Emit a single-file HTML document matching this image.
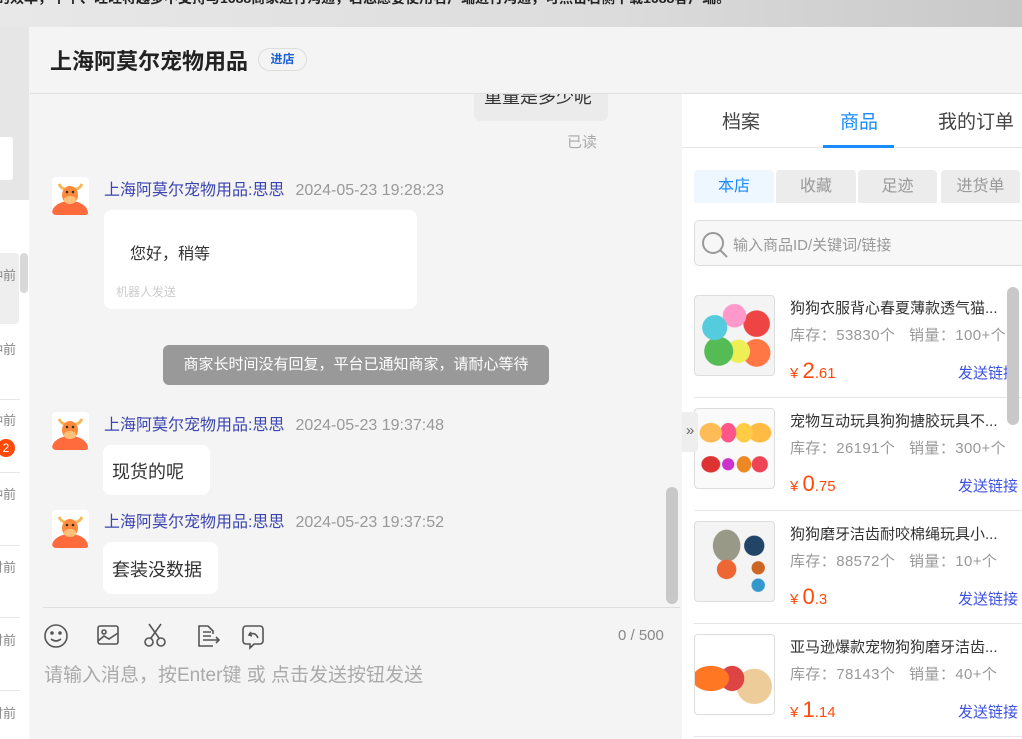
<!DOCTYPE html>
<html><head><meta charset="utf-8"><style>
*{margin:0;padding:0;box-sizing:border-box}
body{width:1022px;height:739px;overflow:hidden;position:relative;background:#f4f4f4;font-family:"Liberation Sans","Noto Sans CJK SC",sans-serif}
.a{position:absolute}
.t{white-space:nowrap}
.av{position:absolute;width:37px;height:38px;background:#fff;border-radius:4px;overflow:hidden}
.nm{position:absolute;font-size:16px;color:#3b45b0;white-space:nowrap}
.nm span{color:#999;margin-left:11px}
.bub{position:absolute;background:#fff;border-radius:8px}
.prod .img{position:absolute;left:694px;width:81px;height:81px;border:1px solid #ddd;border-radius:4px;background:#f8f8f8;overflow:hidden}
.ttl{position:absolute;left:790px;font-size:15px;color:#333;white-space:nowrap}
.stk{position:absolute;left:790px;font-size:15px;color:#999;white-space:nowrap;letter-spacing:0.4px}
.pr{position:absolute;left:790px;color:#ff4a0a;font-size:15px;white-space:nowrap}
.pr b{font-weight:normal;font-size:22px}
.snd{position:absolute;left:958px;font-size:15px;color:#3c50e0;white-space:nowrap}
.dv{position:absolute;left:694px;width:328px;height:1px;background:#e6e6e6}
</style></head><body>
<div class="a" style="left:0;top:0;width:1022px;height:27px;background:linear-gradient(90deg,#e8e8e8,#dcdcdc 60%,#c8c8c8)"></div>
<div class="a t" style="left:-4px;top:-12px;font-size:14px;font-weight:bold;color:#222">的效率，个个、旺旺将越多不支持与1688商家进行沟通，若您愿要使用名广端进行沟通，可点击右侧下载1688客户端。</div>
<div class="a" style="left:0;top:27px;width:29px;height:712px;background:#fff"></div>
<div class="a" style="left:0;top:27px;width:29px;height:173px;background:#e6e6e6"></div>
<div class="a" style="left:0;top:137px;width:13px;height:43px;background:#fff;border-radius:0 3px 3px 0"></div>
<div class="a" style="left:0;top:253px;width:19px;height:71px;background:#eee;border-radius:0 4px 4px 0"></div>
<div class="a" style="left:20px;top:253px;width:8px;height:40px;background:#d8d8d8;border-radius:4px"></div>
<div class="a t" style="left:-10px;top:265px;font-size:13px;color:#888">钟前</div>
<div class="a t" style="left:-10px;top:339px;font-size:13px;color:#888">钟前</div>
<div class="a" style="left:0;top:399px;width:20px;height:1px;background:#e6e6e6"></div>
<div class="a t" style="left:-10px;top:410px;font-size:13px;color:#888">钟前</div>
<div class="a" style="left:-3px;top:439px;width:18px;height:18px;border-radius:50%;background:#ff4a0a;color:#fff;font-size:12px;text-align:center;line-height:18px">2</div>
<div class="a" style="left:0;top:472px;width:20px;height:1px;background:#e6e6e6"></div>
<div class="a t" style="left:-10px;top:484px;font-size:13px;color:#888">钟前</div>
<div class="a" style="left:0;top:545px;width:20px;height:1px;background:#e6e6e6"></div>
<div class="a t" style="left:-10px;top:557px;font-size:13px;color:#888">时前</div>
<div class="a" style="left:0;top:617px;width:20px;height:1px;background:#e6e6e6"></div>
<div class="a t" style="left:-10px;top:630px;font-size:13px;color:#888">时前</div>
<div class="a" style="left:0;top:690px;width:20px;height:1px;background:#e6e6e6"></div>
<div class="a t" style="left:-10px;top:703px;font-size:13px;color:#888">时前</div>
<div class="a" style="left:30px;top:27px;width:992px;height:67px;background:#f4f4f4;border-bottom:1px solid #e0e0e0"></div>
<div class="a t" style="left:50px;top:44px;font-size:22px;font-weight:bold;color:#222">上海阿莫尔宠物用品</div>
<div class="a t" style="left:258px;top:48px;width:49px;height:23px;border:1px solid #ddd;border-radius:12px;font-size:12px;color:#1a5fd0;text-align:center;line-height:21px;font-weight:bold">进店</div>
<div class="a" style="left:474px;top:94px;width:134px;height:27px;background:#ebebeb;border-radius:0 0 6px 6px;overflow:hidden"><div class="a t" style="left:10px;top:-11px;font-size:18px;color:#333">重量是多少呢</div></div>
<div class="a t" style="left:567px;top:131px;font-size:15px;color:#aaa">已读</div>
<div class="av" style="left:52px;top:177px"><svg width="37" height="38"><ellipse cx="18" cy="36" rx="18" ry="12" fill="#ff6b3d"/><path d="M7 7q3 6 8 5M30 7q-3 6-8 5" stroke="#f5b85b" stroke-width="3" fill="none"/><ellipse cx="18" cy="18" rx="8" ry="9" fill="#ff8a3d"/><ellipse cx="18" cy="23" rx="6" ry="4" fill="#ffc07a"/><circle cx="15" cy="15" r="1.3" fill="#333"/><circle cx="21" cy="15" r="1.3" fill="#333"/></svg></div>
<div class="nm" style="left:104px;top:176px">上海阿莫尔宠物用品:思思<span>2024-05-23 19:28:23</span></div>
<div class="bub" style="left:104px;top:210px;width:313px;height:99px"><div class="a t" style="left:26px;top:30px;font-size:16px;color:#333">您好，稍等</div><div class="a t" style="left:12px;top:73px;font-size:12px;color:#ccc">机器人发送</div></div>
<div class="a t" style="left:163px;top:345px;width:386px;height:40px;background:#999;border-radius:6px;color:#fff;font-size:15px;line-height:40px;text-align:center">商家长时间没有回复，平台已通知商家，请耐心等待</div>
<div class="av" style="left:52px;top:412px"><svg width="37" height="38"><ellipse cx="18" cy="36" rx="18" ry="12" fill="#ff6b3d"/><path d="M7 7q3 6 8 5M30 7q-3 6-8 5" stroke="#f5b85b" stroke-width="3" fill="none"/><ellipse cx="18" cy="18" rx="8" ry="9" fill="#ff8a3d"/><ellipse cx="18" cy="23" rx="6" ry="4" fill="#ffc07a"/><circle cx="15" cy="15" r="1.3" fill="#333"/><circle cx="21" cy="15" r="1.3" fill="#333"/></svg></div>
<div class="nm" style="left:104px;top:411px">上海阿莫尔宠物用品:思思<span>2024-05-23 19:37:48</span></div>
<div class="bub" style="left:103px;top:445px;width:107px;height:50px"><div class="a t" style="left:9px;top:13px;font-size:18px;color:#333">现货的呢</div></div>
<div class="av" style="left:52px;top:510px"><svg width="37" height="38"><ellipse cx="18" cy="36" rx="18" ry="12" fill="#ff6b3d"/><path d="M7 7q3 6 8 5M30 7q-3 6-8 5" stroke="#f5b85b" stroke-width="3" fill="none"/><ellipse cx="18" cy="18" rx="8" ry="9" fill="#ff8a3d"/><ellipse cx="18" cy="23" rx="6" ry="4" fill="#ffc07a"/><circle cx="15" cy="15" r="1.3" fill="#333"/><circle cx="21" cy="15" r="1.3" fill="#333"/></svg></div>
<div class="nm" style="left:104px;top:508px">上海阿莫尔宠物用品:思思<span>2024-05-23 19:37:52</span></div>
<div class="bub" style="left:103px;top:542px;width:115px;height:52px"><div class="a t" style="left:9px;top:14px;font-size:18px;color:#333">套装没数据</div></div>
<div class="a" style="left:666px;top:487px;width:12px;height:117px;background:#c8c8c8;border-radius:6px"></div>
<div class="a" style="left:43px;top:607px;width:637px;height:1px;background:#ddd"></div>
<svg class="a" style="left:43px;top:622px" width="240" height="30" fill="none" stroke="#555" stroke-width="1.6">
<circle cx="13" cy="14" r="11"/><circle cx="9" cy="11" r="1" fill="#555"/><circle cx="17" cy="11" r="1" fill="#555"/><path d="M8 17q5 4 10 0"/>
<rect x="55" y="4" width="20" height="18" rx="2"/><circle cx="61" cy="10" r="2"/><path d="M55 19l6-5 5 3 9-6"/>
<circle cx="106" cy="20" r="4"/><circle cx="118" cy="20" r="4"/><path d="M108 16l10-14M116 16l-10-14"/>
<path d="M170 24h-14v-20h9l5 5v3M160 10h8M160 14h8M160 18h6M166 18h10M173 15l3 3-3 3"/>
<path d="M203 4h14a3 3 0 0 1 3 3v12a3 3 0 0 1-3 3h-6l-4 4v-4h-4a3 3 0 0 1-3-3v-12a3 3 0 0 1 3-3zM208 10l-2 3 3 1M206 13q6-4 9 3"/>
</svg>
<div class="a t" style="left:618px;top:627px;font-size:15px;color:#888">0 / 500</div>
<div class="a t" style="left:44px;top:660px;font-size:19px;color:#aaa">请输入消息，按Enter键 或 点击发送按钮发送</div>
<div class="a" style="left:682px;top:94px;width:340px;height:645px;background:#fff"></div>
<div class="a t" style="left:722px;top:107px;font-size:19px;color:#444">档案</div>
<div class="a t" style="left:840px;top:107px;font-size:19px;color:#1a8cff">商品</div>
<div class="a t" style="left:938px;top:107px;font-size:19px;color:#444">我的订单</div>
<div class="a" style="left:682px;top:147px;width:340px;height:1px;background:#e4e4e4"></div>
<div class="a" style="left:823px;top:145px;width:71px;height:3px;background:#1a8cff"></div>
<div class="a t" style="left:694px;top:170px;width:80px;height:33px;background:#eef6ff;border-radius:4px 4px 0 0;font-size:16px;color:#1a8cff;text-align:center;line-height:33px">本店</div>
<div class="a t" style="left:776px;top:170px;width:80px;height:33px;background:#ececec;border-radius:4px 4px 0 0;font-size:16px;color:#999;text-align:center;line-height:33px">收藏</div>
<div class="a t" style="left:858px;top:170px;width:79px;height:33px;background:#ececec;border-radius:4px 4px 0 0;font-size:16px;color:#999;text-align:center;line-height:33px">足迹</div>
<div class="a t" style="left:941px;top:170px;width:79px;height:33px;background:#ececec;border-radius:4px 4px 0 0;font-size:16px;color:#999;text-align:center;line-height:33px">进货单</div>
<div class="a" style="left:694px;top:220px;width:332px;height:46px;border:1px solid #ddd;border-radius:5px;background:#f7f7f7"></div>
<svg class="a" style="left:700px;top:230px" width="30" height="30" fill="none" stroke="#999" stroke-width="2"><circle cx="13" cy="13" r="10"/><path d="M20 20l7 7"/></svg>
<div class="a t" style="left:733px;top:234px;font-size:15px;color:#999">输入商品ID/关键词/链接</div>
<div class="prod">
<div class="img" style="top:295px;background:radial-gradient(circle at 25% 40%,#5cd 0 16%,transparent 17%),radial-gradient(circle at 50% 25%,#f9c 0 16%,transparent 17%),radial-gradient(circle at 78% 35%,#e44 0 16%,transparent 17%),radial-gradient(circle at 30% 70%,#5b5 0 18%,transparent 19%),radial-gradient(circle at 55% 70%,#ee5 0 16%,transparent 17%),radial-gradient(circle at 78% 72%,#f74 0 16%,transparent 17%),#f4f4f4"></div>
<div class="ttl" style="top:297px">狗狗衣服背心春夏薄款透气猫...</div>
<div class="stk" style="top:324px">库存：53830个&nbsp;&nbsp;&nbsp;销量：100+个</div>
<div class="pr" style="top:358px">¥ <b>2</b>.61</div>
<div class="snd" style="top:362px">发送链接</div>
<div class="dv" style="top:397px"></div>
<div class="img" style="top:408px;background:radial-gradient(ellipse at 20% 30%,#fb5 0 12%,transparent 13%),radial-gradient(ellipse at 42% 30%,#f58 0 12%,transparent 13%),radial-gradient(ellipse at 62% 30%,#fc4 0 12%,transparent 13%),radial-gradient(ellipse at 82% 30%,#fb4 0 12%,transparent 13%),radial-gradient(ellipse at 20% 70%,#d33 0 10%,transparent 11%),radial-gradient(circle at 42% 70%,#c3c 0 8%,transparent 9%),radial-gradient(ellipse at 62% 70%,#e82 0 10%,transparent 11%),radial-gradient(circle at 82% 70%,#e45 0 9%,transparent 10%),#fafafa"></div>
<div class="ttl" style="top:410px">宠物互动玩具狗狗搪胶玩具不...</div>
<div class="stk" style="top:437px">库存：26191个&nbsp;&nbsp;&nbsp;销量：300+个</div>
<div class="pr" style="top:471px">¥ <b>0</b>.75</div>
<div class="snd" style="top:475px">发送链接</div>
<div class="dv" style="top:510px"></div>
<div class="img" style="top:521px;background:radial-gradient(circle at 75% 30%,#246 0 12%,transparent 13%),radial-gradient(ellipse at 40% 60%,#e63 0 14%,transparent 15%),radial-gradient(circle at 80% 58%,#c62 0 8%,transparent 9%),radial-gradient(circle at 80% 80%,#39c 0 7%,transparent 8%),radial-gradient(ellipse at 40% 30%,#998 0 20%,transparent 21%),#f4f4f4"></div>
<div class="ttl" style="top:523px">狗狗磨牙洁齿耐咬棉绳玩具小...</div>
<div class="stk" style="top:550px">库存：88572个&nbsp;&nbsp;&nbsp;销量：10+个</div>
<div class="pr" style="top:584px">¥ <b>0</b>.3</div>
<div class="snd" style="top:588px">发送链接</div>
<div class="dv" style="top:623px"></div>
<div class="img" style="top:634px;background:radial-gradient(ellipse at 20% 55%,#f72 0 20%,transparent 21%),radial-gradient(ellipse at 47% 55%,#d44 0 20%,transparent 21%),radial-gradient(circle at 75% 65%,#ec9 0 22%,transparent 23%),#fff"></div>
<div class="ttl" style="top:636px">亚马逊爆款宠物狗狗磨牙洁齿...</div>
<div class="stk" style="top:663px">库存：78143个&nbsp;&nbsp;&nbsp;销量：40+个</div>
<div class="pr" style="top:697px">¥ <b>1</b>.14</div>
<div class="snd" style="top:701px">发送链接</div>
<div class="dv" style="top:736px"></div>
</div>
<div class="a" style="left:1007px;top:287px;width:12px;height:138px;background:#c8c8c8;border-radius:6px"></div>
<div class="a t" style="left:682px;top:412px;width:16px;height:40px;background:#eee;border-radius:0 4px 4px 0;font-size:15px;color:#666;line-height:38px;text-align:center">»</div>
</body></html>
